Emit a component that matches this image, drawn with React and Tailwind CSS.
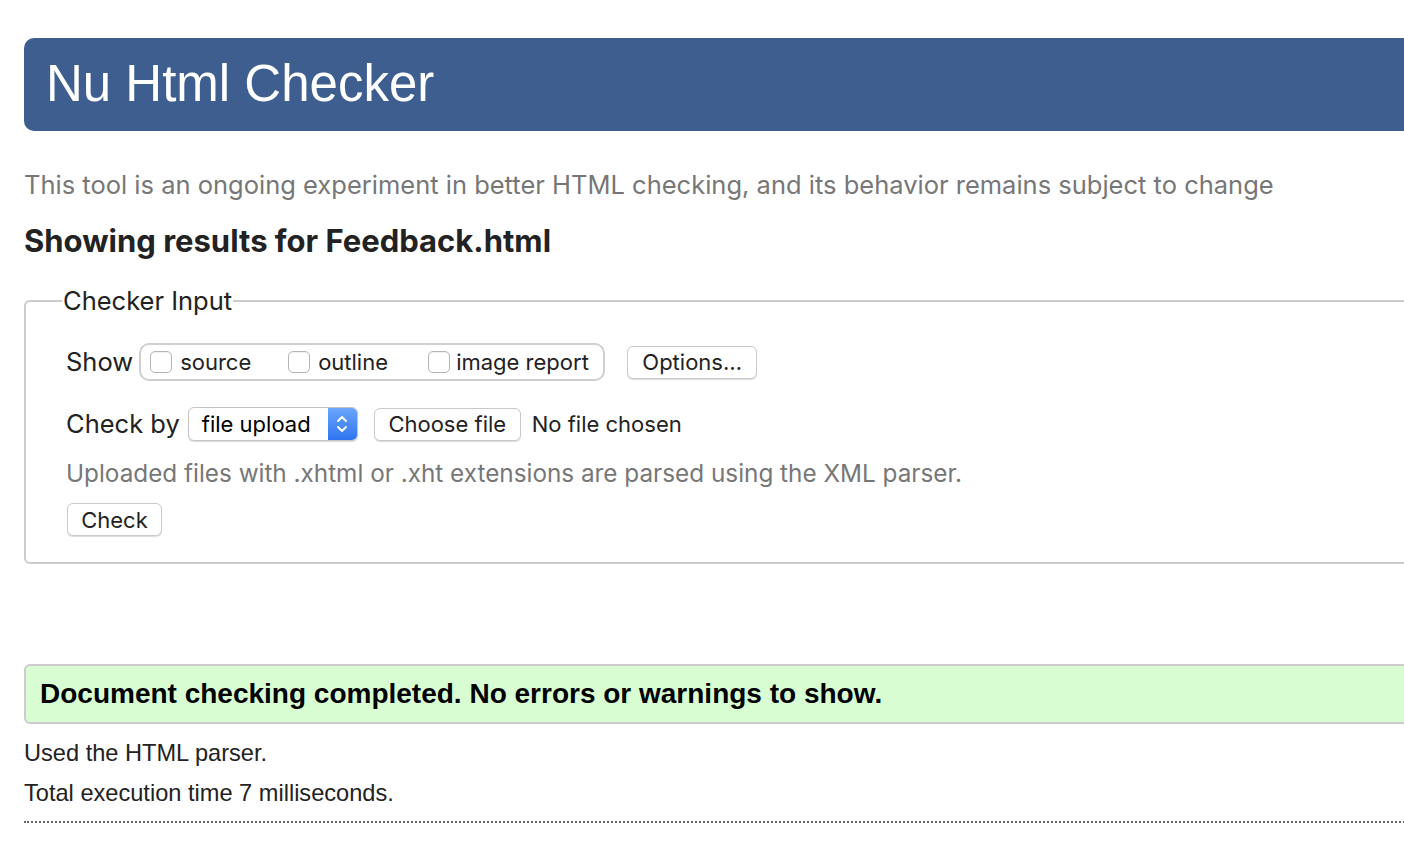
// App.jsx — Nu Html Checker results page
const sf = "font-['Inter',sans-serif]";
const helv = "font-['Liberation_Sans',Arial,sans-serif]";

function Checkbox() {
    return <span className="inline-block w-[22px] h-[22px] rounded-[5px] border border-[#b5b5b5] bg-white shadow-[inset_0_1px_1px_rgba(0,0,0,0.06)]" />;
}

function MacButton({ children, className = "" }) {
    return (
        <button className={`h-[33px] rounded-[6px] bg-white border border-[#c9c9c9] shadow-[0_1px_1px_rgba(0,0,0,0.15)] text-[22px] text-[#222] leading-none ${className}`}>
            {children}
        </button>
    );
}

export default function App() {
    return (
        <div className="w-[1404px] h-[846px] overflow-hidden bg-white">
            <div className="w-[1500px] pl-[24px] pt-[38px]">
                {/* Header */}
                <div className="h-[93px] rounded-[10px] bg-[#3e5e90] flex items-center pl-[22px]">
                    <h1 className={`${helv} text-[51px] text-white leading-none pb-[2px]`}>Nu Html Checker</h1>
                </div>

                <p className={`${sf} text-[25.5px] text-[#777] mt-[39px] leading-[30px] whitespace-nowrap`}>
                    This tool is an ongoing experiment in better HTML checking, and its behavior remains subject to change
                </p>
                <h2 className={`${sf} text-[31px] font-bold text-[#222] mt-[23px] leading-[36px]`}>
                    Showing results for Feedback.html
                </h2>

                {/* Checker input */}
                <fieldset className={`${sf} mt-[27px] border-2 border-[#cccccc] rounded-[6px] h-[278px] pl-[40px] pr-4`}>
                    <legend className="px-[1px] ml-[-4px] text-[25.5px] text-[#222] leading-[30px]">Checker Input</legend>

                    <div className="flex items-center mt-[27px] h-[38px]">
                        <span className="text-[25.5px] text-[#222] mr-[6px]">Show</span>
                        <div className="h-[38px] w-[466px] rounded-[10px] border-2 border-[#cfcfcf] flex items-center pl-[9px] text-[22px] text-[#222]">
                            <label className="flex items-center gap-[8px] w-[138px]"><Checkbox />source</label>
                            <label className="flex items-center gap-[8px] w-[140px]"><Checkbox />outline</label>
                            <label className="flex items-center gap-[6px]"><Checkbox />image report</label>
                        </div>
                        <MacButton className="ml-[22px] w-[130px]">Options…</MacButton>
                    </div>

                    <div className="flex items-center mt-[26px] h-[34px]">
                        <span className="text-[25.5px] text-[#222] mr-[8px]">Check by</span>
                        <div className="h-[34px] w-[170px] rounded-[6px] border border-[#c4c4c4] bg-white shadow-[0_1px_1px_rgba(0,0,0,0.15)] flex overflow-hidden">
                            <span className="flex-1 pl-[13px] flex items-center text-[22px] text-black">file upload</span>
                            <span className="w-[29px] bg-gradient-to-b from-[#6aa5fb] to-[#2f74f0] flex items-center justify-center">
                                <svg width="12" height="22" viewBox="0 0 12 22" fill="none" stroke="white" strokeWidth="2" strokeLinecap="round" strokeLinejoin="round">
                                    <path d="M2 8l4-4 4 4" />
                                    <path d="M2 14l4 4 4-4" />
                                </svg>
                            </span>
                        </div>
                        <MacButton className="ml-[16px] w-[147px]">Choose file</MacButton>
                        <span className="ml-[11px] text-[22px] text-[#222]">No file chosen</span>
                    </div>

                    <p className="mt-[17px] text-[24.3px] text-[#777] leading-[30px] whitespace-nowrap">
                        Uploaded files with .xhtml or .xht extensions are parsed using the XML parser.
                    </p>

                    <MacButton className="mt-[15px] ml-[1px] w-[95px]">Check</MacButton>
                </fieldset>

                {/* Result */}
                <div className={`${helv} mt-[100px] h-[60px] rounded-l-[6px] border-2 border-[#cccccc] bg-[#d9fdd3] flex items-center pl-[14px]`}>
                    <span className="text-[28px] font-bold text-black whitespace-nowrap">Document checking completed. No errors or warnings to show.</span>
                </div>

                <div className={`${helv} text-[23.6px] text-[#222] mt-[15px]`}>
                    <p className="leading-[28px]">Used the HTML parser.</p>
                    <p className="leading-[28px] mt-[12px]">Total execution time 7 milliseconds.</p>
                </div>

                <div className="mt-[14px] border-t-2 border-dotted border-[#666]" />
            </div>
        </div>
    );
}
